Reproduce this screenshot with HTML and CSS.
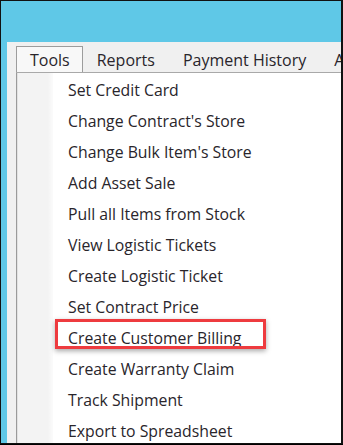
FILE: index.html
```html
<!DOCTYPE html>
<html lang="en">
<head>
    <meta charset="UTF-8">
    <meta name="viewport" content="width=device-width, initial-scale=1.0">
    <title>Tools Menu</title>
    <link rel="stylesheet" href="styles.css">
</head>
<body>
    <div class="frame">
        <div class="window">
            <div class="tabs">
                <div class="tab active">Tools</div>
                <div class="tab">Reports</div>
                <div class="tab">Payment History</div>
                <div class="tab">A</div>
            </div>
            <div class="menu">
                <div class="gutter"></div>
                <ul class="items">
                    <li>Set Credit Card</li>
                    <li>Change Contract's Store</li>
                    <li>Change Bulk Item's Store</li>
                    <li>Add Asset Sale</li>
                    <li>Pull all Items from Stock</li>
                    <li>View Logistic Tickets</li>
                    <li>Create Logistic Ticket</li>
                    <li>Set Contract Price</li>
                    <li class="marked">Create Customer Billing<span class="callout"></span></li>
                    <li>Create Warranty Claim</li>
                    <li>Track Shipment</li>
                    <li>Export to Spreadsheet</li>
                </ul>
            </div>
        </div>
    </div>
</body>
</html>
```
FILE: styles.css
```css
html, body {
    margin: 0;
    padding: 0;
    background-color: #000;
}
body {
    width: 343px;
    height: 445px;
    overflow: hidden;
    font-family: "Open Sans", "Noto Sans", sans-serif;
    color: #29252b;
}
.frame {
    box-sizing: border-box;
    width: 343px;
    height: 444px;
    border: 1px solid #111;
    border-right-width: 2px;
    background-color: #5fc8e7;
    padding: 41px 0 0 6px;
    display: flex;
}
.window {
    flex: 1;
    background-color: #f0f0f0;
    padding: 4px 0 0 9px;
    display: flex;
    flex-direction: column;
    overflow: hidden;
}
.tabs {
    display: flex;
    height: 26px;
    border-bottom: 1px solid #a9a9a9;
    white-space: nowrap;
}
.tab {
    font-size: 16px;
    line-height: 26px;
    padding: 0 13px;
    border: 1px solid transparent;
    border-bottom: none;
}
.tab.active {
    background-color: #f8f8f8;
    border-color: #9c9c9c;
    padding: 0 12px 0 13px;
}
.menu {
    flex: 1;
    display: flex;
    background-color: #fff;
    border-left: 1px solid #9a9a9a;
}
.gutter {
    width: 35px;
    background: linear-gradient(to right, #f3f3f3 85%, #fbfbfb);
    border-left: 1px solid #e2e2e2;
}
.items {
    list-style: none;
    margin: 0;
    padding: 2px 0 0 15px;
    font-size: 15.8px;
}
.items li {
    height: 31px;
    line-height: 31px;
    white-space: nowrap;
    position: relative;
}
.callout {
    position: absolute;
    left: -13px;
    top: -4px;
    width: 205px;
    height: 24px;
    border: 3px solid #ee3b3f;
    box-shadow: 0 2px 5px rgba(0, 0, 0, 0.35);
}
```
